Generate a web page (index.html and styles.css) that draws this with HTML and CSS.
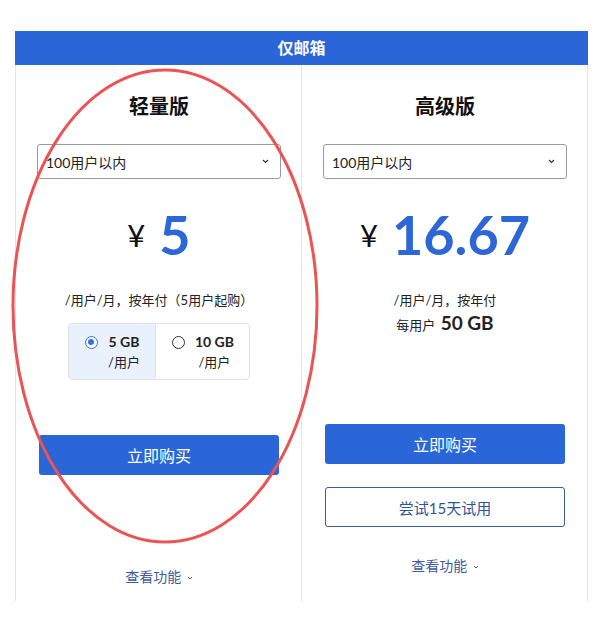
FILE: index.html
```html
<!DOCTYPE html>
<html lang="zh-CN">
<head>
  <meta charset="UTF-8" />
  <meta name="viewport" content="width=device-width, initial-scale=1.0"/>
  <title>仅邮箱</title>
  <link rel="stylesheet" href="styles.css">
</head>
<body>
  <div class="plans">
    <div class="plans-head">仅邮箱</div>

    <div class="plans-grid">
      <div class="plan">
        <h3 class="plan-title">轻量版</h3>
        <div class="select">
          <span>100用户以内</span>
          <svg class="chev" width="7" height="5" viewBox="0 0 7 5"><path d="M1 1l2.5 2.5L6 1" fill="none" stroke="#333" stroke-width="1.2"/></svg>
        </div>
        <div class="price"><span class="yen">¥</span><span class="num">5</span></div>
        <div class="detail">
          <p class="note">/用户/月，按年付（5用户起购）</p>
          <div class="sizes">
            <label class="size active">
              <span class="radio checked"></span>
              <span class="size-text"><b>5 GB</b><br>/用户</span>
            </label>
            <label class="size">
              <span class="radio"></span>
              <span class="size-text"><b>10 GB</b><br>/用户</span>
            </label>
          </div>
        </div>
        <button class="buy">立即购买</button>
        <button class="trial hidden">尝试15天试用</button>
        <a class="more" href="#">查看功能 <svg width="6" height="4" viewBox="0 0 6 4"><path d="M1 1l2 2 2-2" fill="none" stroke="#3b5b9c" stroke-width="1"/></svg></a>
      </div>

      <div class="plan">
        <h3 class="plan-title">高级版</h3>
        <div class="select">
          <span>100用户以内</span>
          <svg class="chev" width="7" height="5" viewBox="0 0 7 5"><path d="M1 1l2.5 2.5L6 1" fill="none" stroke="#333" stroke-width="1.2"/></svg>
        </div>
        <div class="price"><span class="yen">¥</span><span class="num">16.67</span></div>
        <div class="detail">
          <p class="note">/用户/月，按年付</p>
          <p class="note">每用户 <span class="quota">50 GB</span></p>
        </div>
        <button class="buy">立即购买</button>
        <button class="trial">尝试15天试用</button>
        <a class="more" href="#">查看功能 <svg width="6" height="4" viewBox="0 0 6 4"><path d="M1 1l2 2 2-2" fill="none" stroke="#3b5b9c" stroke-width="1"/></svg></a>
      </div>
    </div>
  </div>

  <svg class="mark" width="604" height="622" viewBox="0 0 604 622">
    <ellipse cx="165" cy="306" rx="152" ry="236" fill="none" stroke="#ea5455" stroke-width="3"/>
  </svg>
</body>
</html>
```

FILE: styles.css
```css
body {
  margin: 0;
  background: #fff;
  font-family: Lato, "Noto Sans CJK SC", sans-serif;
  color: #222;
  position: relative;
}

.plans {
  width: 573px;
  margin: 31px 0 0 15px;
}

.plans-head {
  height: 34px;
  line-height: 34px;
  background: #2a66d8;
  color: #fff;
  text-align: center;
  font-size: 16px;
  font-weight: bold;
}

.plans-grid {
  display: grid;
  grid-template-columns: 286px 287px;
}

.plan {
  border-left: 1px solid #e4e4e4;
  padding: 27px 20px 14px 21px;
  display: flex;
  flex-direction: column;
  align-items: stretch;
}

.plan:last-child {
  border-right: 1px solid #e4e4e4;
}

.plan-title {
  margin: 0;
  font-size: 20px;
  line-height: 28px;
  text-align: center;
  color: #111;
}

.select {
  margin-top: 24px;
  height: 35px;
  box-sizing: border-box;
  border: 1px solid #9a9a9a;
  border-radius: 3px;
  padding: 0 11px 0 8px;
  display: flex;
  align-items: center;
  justify-content: space-between;
  font-size: 14px;
  color: #222;
}

.price {
  margin-top: 26px;
  height: 60px;
  display: flex;
  align-items: center;
  justify-content: center;
  gap: 14px;
}

.yen {
  font-size: 31px;
  color: #111;
}

.num {
  font-size: 54px;
  font-weight: bold;
  color: #2d67d6;
  line-height: 60px;
}

.detail {
  margin-top: 25px;
  min-height: 110px;
}

.note {
  margin: 0;
  font-size: 13px;
  line-height: 20px;
  text-align: center;
  color: #222;
}

.note + .note {
  line-height: 26px;
}

.quota {
  font-size: 19px;
  font-weight: bold;
  margin-left: 2px;
}

.sizes {
  display: flex;
  width: max-content;
  margin: 13px auto 31px;
  border: 1px solid #e2e2e2;
  border-radius: 4px;
  overflow: hidden;
}

.size {
  display: flex;
  align-items: flex-start;
  gap: 10px;
  padding: 8px 15px 7px 16px;
  font-size: 13px;
  line-height: 20px;
  color: #222;
}

.size + .size {
  border-left: 1px solid #e2e2e2;
}

.size.active {
  background: #e9f1fd;
}

.size-text {
  text-align: center;
}

.size-text b {
  font-size: 14px;
  font-weight: bold;
}

.radio {
  width: 13px;
  height: 13px;
  box-sizing: border-box;
  border: 1.5px solid #333;
  border-radius: 50%;
  margin-top: 4px;
  position: relative;
  background: #fff;
}

.radio.checked {
  border-color: #3b6fd8;
}

.radio.checked::after {
  content: "";
  position: absolute;
  left: 2px;
  top: 2px;
  width: 6px;
  height: 6px;
  border-radius: 50%;
  background: #3b6fd8;
}

.buy, .trial {
  height: 40px;
  margin: 24px 2px 0;
  border-radius: 3px;
  font-family: Lato, "Noto Sans CJK SC", sans-serif;
  font-size: 16px;
  cursor: pointer;
}

.buy {
  background: #2a66d8;
  color: #fff;
  border: none;
}

.trial {
  margin-top: 23px;
  background: #fff;
  border: 1px solid #3a5d9c;
  color: #2f5496;
  font-size: 15px;
}

.trial.hidden {
  visibility: hidden;
}

.more {
  margin-top: 29px;
  line-height: 20px;
  text-align: center;
  font-size: 14px;
  color: #3b5b9c;
  text-decoration: none;
}

.more svg {
  vertical-align: middle;
  margin-left: 2px;
}

.mark {
  position: absolute;
  left: 0;
  top: 0;
  pointer-events: none;
}
```
